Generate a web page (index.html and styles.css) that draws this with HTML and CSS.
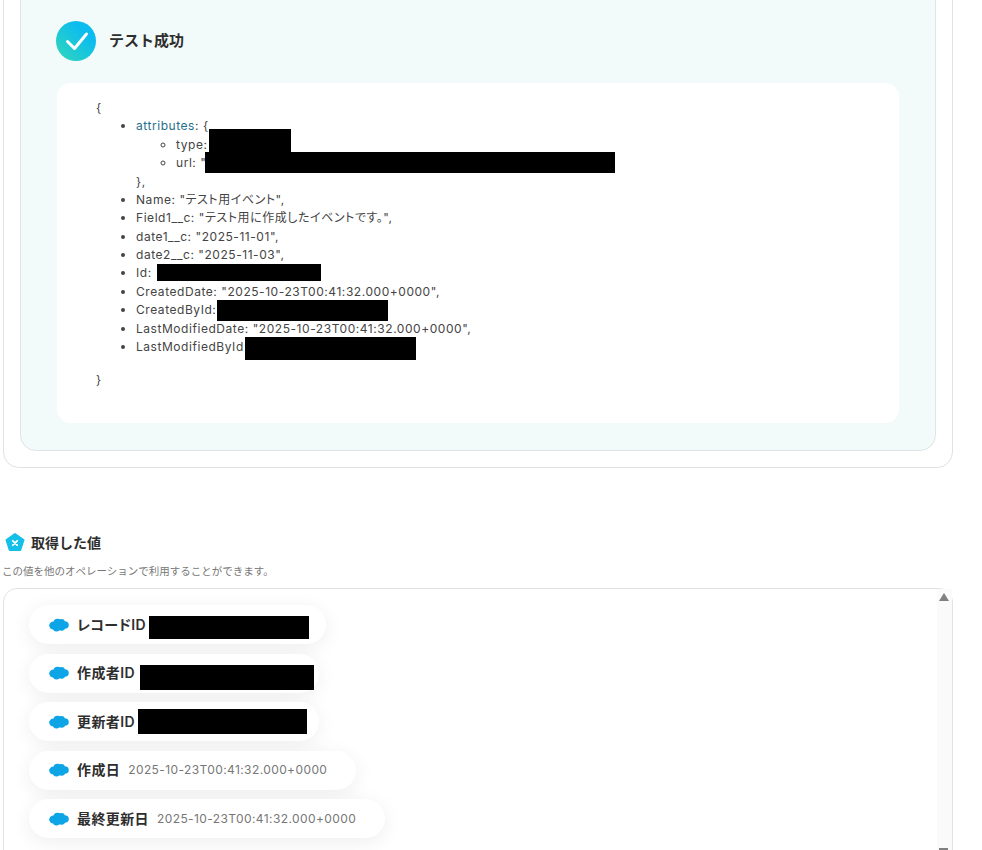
FILE: index.html
```html
<!DOCTYPE html>
<html lang="ja">
<head>
<meta charset="utf-8">
<title>テスト成功</title>
<link rel="stylesheet" href="styles.css">
</head>
<body>
<div class="page">
  <section class="outer">
    <div class="result">
      <header class="result-head">
        <span class="check">
          <svg viewBox="0 0 40 40" width="40" height="40"><path d="M11.500 20.500 L18.500 27.500 L30.500 13" fill="none" stroke="#fff" stroke-width="3" stroke-linecap="round" stroke-linejoin="round"/></svg>
        </span>
        <h2>テスト成功</h2>
      </header>
      <div class="json">
        <div class="brace">{</div>
        <ul class="l1">
          <li><span class="key">attributes</span>: {
            <ul class="l2">
              <li>type: <span class="redact r1"></span></li>
              <li>url: "<span class="redact r2"></span></li>
            </ul>
            },
          </li>
          <li>Name: "テスト用イベント",</li>
          <li>Field1__c: "テスト用に作成したイベントです。",</li>
          <li>date1__c: "2025-11-01",</li>
          <li>date2__c: "2025-11-03",</li>
          <li>Id: <span class="redact r3"></span></li>
          <li>CreatedDate: "2025-10-23T00:41:32.000+0000",</li>
          <li>CreatedById:<span class="redact r4"></span></li>
          <li>LastModifiedDate: "2025-10-23T00:41:32.000+0000",</li>
          <li>LastModifiedById<span class="redact r5"></span></li>
        </ul>
        <div class="brace close">}</div>
      </div>
    </div>
  </section>

  <section class="values">
    <h3 class="values-title">
      <svg viewBox="0 0 20 20" width="20" height="20"><path d="M10 2 L18.500 8 L15.300 18 L4.700 18 L1.500 8 Z" fill="#14bfe8" stroke="#14bfe8" stroke-width="2" stroke-linejoin="round"/><path d="M7.800 8.800 L12.200 13.200 M12.200 8.800 L7.800 13.200" stroke="#fff" stroke-width="1.800" stroke-linecap="round"/></svg>
      取得した値
    </h3>
    <p class="values-note">この値を他のオペレーションで利用することができます。</p>
    <div class="value-box">
      <div class="pills">
        <div class="pill w1"><svg class="cloud" viewBox="0 0 20 14" width="20" height="14"><use href="#sf"/></svg><b>レコードID</b><span class="redact r6"></span></div>
        <div class="pill w2"><svg class="cloud" viewBox="0 0 20 14" width="20" height="14"><use href="#sf"/></svg><b>作成者ID</b><span class="redact r7"></span></div>
        <div class="pill w3"><svg class="cloud" viewBox="0 0 20 14" width="20" height="14"><use href="#sf"/></svg><b>更新者ID</b><span class="redact r8"></span></div>
        <div class="pill"><svg class="cloud" viewBox="0 0 20 14" width="20" height="14"><use href="#sf"/></svg><b>作成日</b><span class="val">2025-10-23T00:41:32.000+0000</span></div>
        <div class="pill"><svg class="cloud" viewBox="0 0 20 14" width="20" height="14"><use href="#sf"/></svg><b>最終更新日</b><span class="val">2025-10-23T00:41:32.000+0000</span></div>
      </div>
      <div class="scrollbar"><span class="up"></span><span class="down"></span></div>
    </div>
  </section>
</div>
<svg class="defs" width="0" height="0"><defs><g id="sf" fill="#0ea5e6"><ellipse cx="8.500" cy="5" rx="4" ry="4.200"/><ellipse cx="12.500" cy="4.800" rx="3.500" ry="3.800"/><ellipse cx="15.600" cy="7" rx="4.200" ry="3.800"/><ellipse cx="4.500" cy="7.500" rx="4.300" ry="4"/><ellipse cx="7.500" cy="9.800" rx="3.700" ry="3.600"/><ellipse cx="12.500" cy="9.300" rx="3.700" ry="3.400"/></g></defs></svg>
</body>
</html>
```
FILE: styles.css
```css
* { box-sizing: border-box; }
html, body { margin: 0; padding: 0; background: #fff; }
body { font-family: Inter, "Noto Sans CJK JP", sans-serif; color: #333; }
.page { width: 982px; height: 850px; overflow: hidden; padding-left: 3px; }
.defs { position: absolute; }

.outer {
  width: 950px; height: 488px; margin-top: -20px; padding: 0 16px 16px;
  border: 1px solid #e2e2e2; border-radius: 16px;
}
.result {
  height: 470px; width: 916px; padding: 19px 36px 27px;
  background: #f3fbfa; border: 1px solid #dfe5e4; border-radius: 16px;
}
.result-head { display: flex; align-items: center; gap: 13px; height: 40px; margin: 20px 0 0 -1px; }
.check {
  width: 40px; height: 40px; border-radius: 50%;
  background: linear-gradient(45deg, #2dd4bf 10%, #0cbcef 72%);
  display: block;
}
.check svg { display: block; }
.result-head h2 { margin: 0 0 3px; font-size: 15px; font-weight: 600; color: #2e2e2e; }

.json {
  width: 842px; height: 340px; margin-top: 22px; padding: 16px 39px 0;
  background: #fff; border-radius: 14px;
  font-size: 12px; line-height: 18.370px; color: #444;
  letter-spacing: .55px; font-feature-settings: "palt";
}
.l1 { margin: 0; padding-left: 40px; list-style: disc; }
.l2 { margin: 0; padding-left: 40px; list-style: circle; }
.l1 li { position: relative; }
.key { color: #1f6f8b; }
.close { margin-top: 15px; }

.redact { position: absolute; background: #000; display: block; }
.r1 { left: 33px; top: -7px; width: 82px; height: 23px; }
.r2 { left: 29px; top: -2px; width: 410px; height: 21px; }
.r3 { left: 21px; top: 0; width: 164px; height: 17px; }
.r4 { left: 81px; top: -1px; width: 171px; height: 21px; }
.r5 { left: 109px; top: -1px; width: 171px; height: 23px; }

.values { margin-top: 63px; position: relative; }
.values-title {
  display: flex; align-items: center; gap: 6px; margin: 0 0 0 2px; height: 22px;
  font-size: 14px; font-weight: 600; color: #2e2e2e;
}
.values-note { margin: 11px 0 0 -1px; font-size: 10.500px; line-height: 15px; color: #777; }
.value-box {
  position: relative; width: 950px; height: 300px; margin-top: 9px;
  border: 1px solid #e2e2e2; border-radius: 14px; padding: 16px 25px;
}
.pills { display: flex; flex-direction: column; align-items: flex-start; gap: 9.600px; }
.pill {
  position: relative; display: flex; align-items: center; height: 39px; padding: 0 29px 0 20px;
  background: #fff; border-radius: 20px; box-shadow: 0 4px 20px rgba(0,0,0,.07);
  font-size: 14px; color: #2e2e2e; letter-spacing: .4px; font-feature-settings: "palt";
}
.w1 { width: 297px; }
.w2 { width: 290px; }
.w3 { width: 290px; }
.cloud { margin-right: 8px; flex: none; }
.pill b { font-weight: 600; margin-bottom: 2px; }
.val { margin-left: 8px; font-size: 12px; letter-spacing: .4px; color: #777; margin-bottom: 1px; }
.r6 { left: 120px; top: 11px; width: 160px; height: 23px; }
.r7 { left: 111px; top: 11px; width: 174px; height: 25px; }
.r8 { left: 109px; top: 7px; width: 169px; height: 25px; }

.scrollbar { position: absolute; right: 0; top: 0; bottom: 0; width: 15px; background: #fafafa; }
.up {
  position: absolute; left: 2px; top: 4px; width: 0; height: 0;
  border-left: 5px solid transparent; border-right: 5px solid transparent; border-bottom: 8px solid #808080;
}
.down { position: absolute; left: 2px; top: 259px; width: 9px; height: 2px; background: #808080; }
```
